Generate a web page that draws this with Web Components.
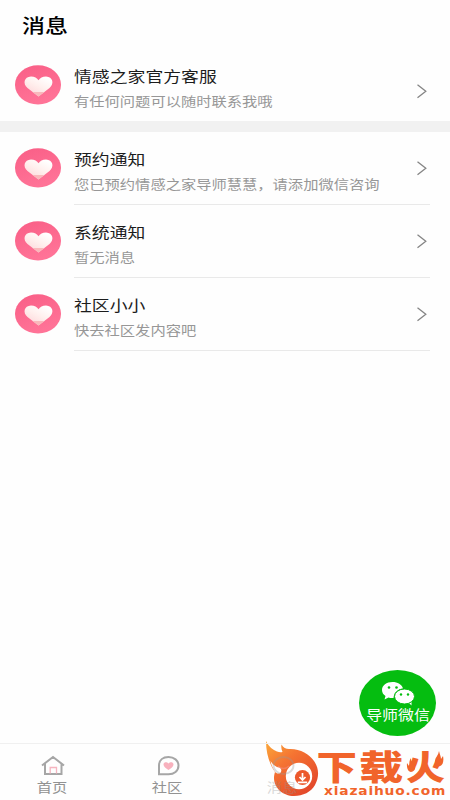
<!DOCTYPE html>
<html lang="zh-CN"><head><meta charset="utf-8"><title>消息</title>
<style>html,body{margin:0;height:100%;background:#fefefe;overflow:hidden}</style></head>
<body><message-page></message-page>
<script>
const define=(name,html)=>customElements.define(name,class extends HTMLElement{
 constructor(){super();const t=document.createElement('template');t.innerHTML=html;
 this.attachShadow({mode:'open'}).append(t.content.cloneNode(true));}
});
define('wide-text',`<style>:host{display:block;width:max-content;white-space:nowrap;transform:scaleX(var(--wide,1.175));transform-origin:var(--from,left) center}</style><slot></slot>`);
define('heart-avatar',`<style>:host{display:block;width:46px;height:40px}svg{display:block}</style>
<svg width="46" height="40" viewBox="0 0 46 40"><defs><linearGradient id="p" x1="0" y1="0" x2=".4" y2="1"><stop stop-color="#f95e86"/><stop offset="1" stop-color="#ff7397"/></linearGradient><linearGradient id="h" x1="0" y1="1" x2=".7" y2="0"><stop stop-color="#fdd0d4"/><stop offset=".6" stop-color="#fff0ee"/><stop offset="1" stop-color="#fff"/></linearGradient></defs>
<ellipse cx="23" cy="19.8" rx="23" ry="19.6" fill="url(#p)"/>
<path d="M23.500 31.500L12.500 23C7.500 19 9 11.800 16 11.600C19.500 11.600 22 13 23.500 15.300C25 13 27.500 11.600 31 11.600C38 11.800 39.500 19 34.500 23Z" fill="url(#h)"/>
<path d="M17.500 27H29.500L23.500 31.500Z" fill="#f9b8bb"/></svg>`);
define('message-row',`<style>
:host{display:grid;grid-template-columns:46px 1fr 13px;grid-template-rows:56px 1px;column-gap:13px;height:73px;box-sizing:border-box;padding:16px 20px 0 15px}
.copy{display:flex;flex-direction:column;gap:6px;margin-left:-.5px}
.title{font-size:15.2px;line-height:20px;color:#1c1c1c}.sub{font-size:13px;line-height:20px;color:#979797}
.arrow{padding-top:var(--arrow,13px)}svg{display:block}
.line{grid-column:2/4;height:1px;background:#e9e9e9}:host([plain]) .line{visibility:hidden}
</style><heart-avatar></heart-avatar><div class="copy"><wide-text class="title"><slot name="title"></slot></wide-text><wide-text class="sub"><slot></slot></wide-text></div>
<div class="arrow"><svg width="10" height="15" viewBox="0 0 10 15"><path d="M.5.700L8.800 7.200L.5 13.700" fill="none" stroke="#858585" stroke-width="1.300"/></svg></div><div class="line"></div>`);
define('wechat-button',`<style>:host{display:flex;flex-direction:column;align-items:center;width:77px;height:66px;border-radius:50%;background:#05bd10;color:#fff;box-sizing:border-box;padding-top:11px}
wide-text{--from:center;--wide:1.180;font-size:13.500px;line-height:20px;margin-top:-3px}svg{display:block}</style>
<svg width="34" height="26" viewBox="0 0 34 26"><path d="M11.500 1C5.500 1 1 4.500 1 9C1 11.500 2.300 13.600 4.500 15L3.500 18.500L7.500 16.500Q9.500 17.200 12.500 17C13 11 17 8 22 7.500C21 3.500 16.500 1 11.500 1Z" fill="#fff"/><path d="M27 21L30.500 24.500L30.500 19Z" fill="#fff"/><ellipse cx="23.500" cy="15.500" rx="10" ry="7.500" fill="#fff" stroke="#05bd10"/><g fill="#05bd10"><circle cx="8" cy="6.500" r="1.300"/><circle cx="15.500" cy="6.500" r="1.300"/><circle cx="20" cy="13.500" r="1.200"/><circle cx="27" cy="13.500" r="1.200"/></g></svg><wide-text>导师微信</wide-text>`);
define('nav-item',`<style>:host{display:flex;flex-direction:column;align-items:center;padding-top:11px;opacity:var(--fade,1)}
::slotted(svg){display:block}wide-text{--from:center;font-size:13px;line-height:20px;margin-top:1px;color:#929292}</style><slot name="icon"></slot><wide-text><slot></slot></wide-text>`);
define('site-mark',`<style>:host{display:block}svg{display:block}text{font-family:"Noto Sans CJK SC",sans-serif;font-weight:900}</style>
<svg width="190" height="62" viewBox="260 738 190 62"><defs><linearGradient id="f" x1="0" y1="0" x2=".8" y2="1"><stop stop-color="#fba93a"/><stop offset=".4" stop-color="#f57432"/><stop offset="1" stop-color="#e2452a"/></linearGradient></defs>
<path d="M266 741C269 747 273 750 277 751.500C279 752.300 281 752.300 282.500 752C281.300 749.500 281 747 281.500 744.500C283 747.500 286 749 289 749C300 748.500 309 754 314 761C319 768 319.500 777 315 785C311 792 303 796 294 796C283 796 274 788 274 778C274 775.500 274.500 773.500 275 772C270 765 266 754 266 741Z" fill="url(#f)"/>
<path d="M270.500 761C273 765 276 767 279 767.500C282 768.500 282 772 279.500 773.500C277.500 774 275.800 772.800 275 772C273 769 271.300 765 270.500 761Z" fill="#fff"/>
<circle cx="299" cy="776" r="13.200" fill="#fff"/>
<circle cx="302.500" cy="777.500" r="7.600" fill="#ec592d"/><path d="M302.500 773V779M299.500 777L302.500 780L305.500 777M297.800 782.300H307.200" stroke="#fff" stroke-width="1.700" fill="none"/>
<g fill="#f1642b"><text transform="translate(316.500 780) scale(1.190 1)" font-size="34">下</text><text transform="translate(359 780) scale(1.300 1)" font-size="34">载</text><text transform="translate(406 780) scale(1.150 1)" font-size="34">火</text>
<path d="M411 758C410.500 762 414.500 763 415 766C416 769 414 772 411 772C408 772 406.500 768 407 763L409 766C409.500 763 409 761 411 758Z"/><path d="M439 751C438.500 755 435.500 757 435 761C434.500 765 437 767 440 766C443 765 444 761 443 756L441 759C441 756 439.500 754 439 751Z"/>
<text transform="translate(324 795) scale(1.150 1)" font-size="12" style="font-family:'DejaVu Sans',sans-serif;font-weight:700" textLength="105.500" lengthAdjust="spacing">xiazaihuo.com</text></g></svg>`);
define('message-page',`<style>
:host{display:flex;flex-direction:column;position:relative;width:450px;height:800px;background:#fefefe;font-family:"Noto Sans CJK SC",sans-serif}
header{height:49px;box-sizing:border-box;padding:10px 21.500px 0;color:#000;font-size:19.800px;line-height:29px;font-weight:500}
.gap{height:11px;margin-top:-1px;background:#f1f1f1}
main{flex:1}
nav{height:57px;box-sizing:border-box;border-top:1px solid #f0f0f0;display:grid;grid-template-columns:105px 125px 105px 1fr;position:relative;z-index:1}
wechat-button{position:absolute;left:359px;top:670px}site-mark{position:absolute;left:260px;top:738px}
</style>
<header><wide-text style="--wide:1.16">消息</wide-text></header>
<main><message-row plain style="--arrow:19px"><span slot="title">情感之家官方客服</span>有任何问题可以随时联系我哦</message-row><div class="gap"></div>
<message-row><span slot="title">预约通知</span>您已预约情感之家导师慧慧，请添加微信咨询</message-row>
<message-row><span slot="title">系统通知</span>暂无消息</message-row>
<message-row><span slot="title">社区小小</span>快去社区发内容吧</message-row></main>
<nav><nav-item><svg slot="icon" width="24" height="21" viewBox="0 0 24 21"><path d="M1 10.500L12 2L23 10.500M4 8.500V19H20.500V8.500" fill="none" stroke="#a6a6a6" stroke-width="2"/><path d="M9.200 18.500V12.500H15.500V18.500" fill="none" stroke="#f6b5c0" stroke-width="1.300"/></svg>首页</nav-item>
<nav-item><svg slot="icon" width="24" height="21" viewBox="0 0 24 21"><path d="M3 19.200V10.500C3 5 7 2 12.500 2C18 2 22.500 5.500 22.500 10.500C22.500 16 18 19.200 12.500 19.200Z" fill="none" stroke="#a6a6a6" stroke-width="2"/><path d="M12.500 15C10 13.500 7.500 11.500 7.500 9.500C7.500 6.800 11 6.500 12.500 8.500C14 6.500 17.500 6.800 17.500 9.500C17.500 11.500 15 13.500 12.500 15Z" fill="#f8b1bd"/></svg>社区</nav-item>
<nav-item style="--fade:.35"><svg slot="icon" width="24" height="21" viewBox="0 0 24 21"><ellipse cx="12.500" cy="10.500" rx="10" ry="8.500" fill="none" stroke="#999" stroke-width="1.800"/><path d="M7 11Q12.500 16 18 11" fill="none" stroke="#f6a0ae" stroke-width="1.500"/></svg>消息</nav-item></nav>
<site-mark></site-mark><wechat-button></wechat-button>`);
</script></body></html>
